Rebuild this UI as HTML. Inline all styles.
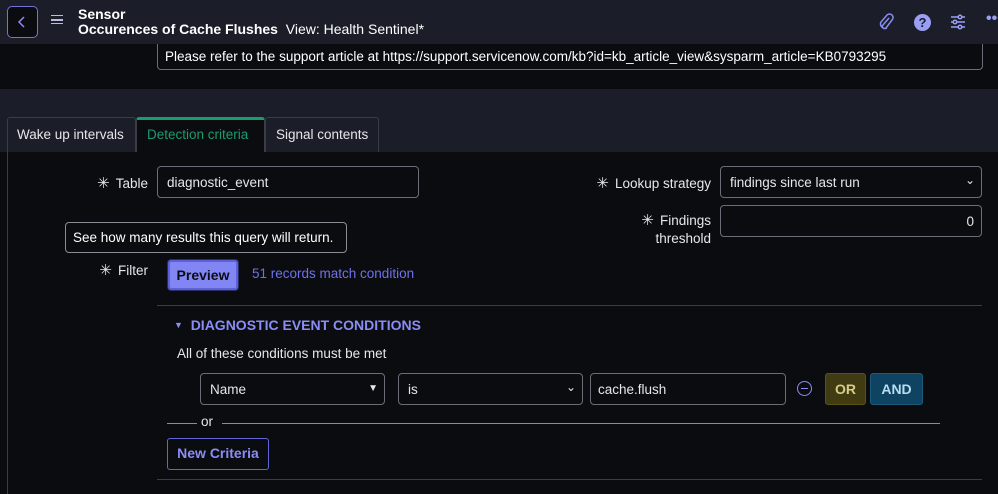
<!DOCTYPE html>
<html><head><style>
*{box-sizing:border-box;margin:0;padding:0}
body{width:998px;height:494px;overflow:hidden;background:#0b0c10;font-family:"Liberation Sans",sans-serif;font-size:13.5px;color:#e6e7ea;position:relative}
.a{position:absolute;white-space:nowrap}
.inp{position:absolute;border:1px solid #6b6e78;border-radius:4px;background:#0b0c10;padding-left:9px;display:flex;align-items:center}
.lbl{position:absolute;text-align:right;white-space:nowrap}
.ast{font-size:15px;margin-right:6px}
</style></head><body>
<div class="a" style="left:0;top:0;width:998px;height:44px;background:#1b1e28"></div>
<div class="a" style="left:7px;top:6px;width:31px;height:32px;border:1.5px solid #7275d6;border-radius:5px;background:#0b0c10"></div>
<svg class="a" style="left:16px;top:15px" width="12" height="14"><path d="M8 2 L3 7 L8 12" stroke="#8a8df2" stroke-width="1.5" fill="none"/></svg>
<div class="a" style="left:51px;top:15px;width:12px;height:9px;border-top:1.5px solid #b9bce8;border-bottom:1.5px solid #b9bce8"></div>
<div class="a" style="left:51px;top:19px;width:12px;height:1.5px;background:#b9bce8"></div>
<div class="a" style="left:78px;top:6px;font-weight:bold;font-size:14px;color:#fff">Sensor</div>
<div class="a" style="left:78px;top:21px;font-size:14px;color:#fff"><b>Occurences of Cache Flushes</b>&nbsp; View: Health Sentinel*</div>
<svg class="a" style="left:878px;top:13px" width="16" height="18"><path d="M11 5 L5 12 a2 2 0 0 0 3 3 L14 7 a3.5 3.5 0 0 0 -5 -5 L3 9 a4.5 4.5 0 0 0 6 6" stroke="#8a8df2" stroke-width="1.5" fill="none"/></svg>
<div class="a" style="left:914px;top:14px;width:17px;height:17px;border-radius:50%;background:#9b9ef5;color:#1b1e28;font-weight:bold;font-size:13px;text-align:center;line-height:17px">?</div>
<svg class="a" style="left:950px;top:14px" width="16" height="16"><g stroke="#9b9ef5" stroke-width="1.5" fill="#1b1e28"><line x1="1" y1="3" x2="15" y2="3"/><line x1="1" y1="8" x2="15" y2="8"/><line x1="1" y1="13" x2="15" y2="13"/><circle cx="10" cy="3" r="1.8"/><circle cx="5" cy="8" r="1.8"/><circle cx="10" cy="13" r="1.8"/></g></svg>
<div class="a" style="left:986px;top:10px;color:#9b9ef5;font-weight:bold;font-size:16px">•••</div>
<div class="inp" style="left:157px;top:44px;width:826px;height:26px;border-top:none;border-radius:0 0 4px 4px;color:#fff;padding-left:7px;font-size:13.5px">Please refer to the support article at https://support.servicenow.com/kb?id=kb_article_view&amp;sysparm_article=KB0793295</div>
<div class="a" style="left:0;top:89px;width:998px;height:63px;background:#1b1e28"></div>
<div class="a" style="left:7px;top:117px;width:129px;height:36px;background:#1b1e28;border:1px solid #3a3d47;border-bottom:none;border-radius:3px 3px 0 0;padding:9px 0 0 9px">Wake up intervals</div>
<div class="a" style="left:136px;top:117px;width:129px;height:36px;background:#0b0c10;border:1px solid #3a3d47;border-top:3px solid #1a9c6c;border-bottom:none;border-radius:3px 3px 0 0;padding:7px 0 0 10px;color:#1a9c6c">Detection criteria</div>
<div class="a" style="left:265px;top:117px;width:114px;height:36px;background:#1b1e28;border:1px solid #3a3d47;border-bottom:none;border-radius:3px 3px 0 0;padding:9px 0 0 10px">Signal contents</div>
<div class="a" style="left:7px;top:152px;width:991px;height:342px;background:#0b0c10;border-left:1px solid #3a3d47"></div>
<div class="lbl" style="left:90px;top:174px;width:58px"><span class="ast">✳</span>Table</div>
<div class="inp" style="left:157px;top:166px;width:262px;height:32px">diagnostic_event</div>
<div class="lbl" style="left:560px;top:174px;width:151px"><span class="ast">✳</span>Lookup strategy</div>
<div class="inp" style="left:720px;top:166px;width:262px;height:32px">findings since last run<span style="position:absolute;right:6px;top:6px;font-size:12px">⌄</span></div>
<div class="lbl" style="left:600px;top:212px;width:111px;line-height:18px"><span class="ast">✳</span>Findings<br>threshold</div>
<div class="inp" style="left:720px;top:205px;width:262px;height:32px;justify-content:flex-end;padding-right:7px">0</div>
<div class="inp" style="left:65px;top:222px;width:282px;height:31px;background:#0b0c10;border-color:#8a8d96;padding-left:7px;color:#fff">See how many results this query will return.</div>
<div class="lbl" style="left:90px;top:261px;width:58px"><span class="ast">✳</span>Filter</div>
<div class="a" style="left:168px;top:260px;width:70px;height:30px;background:#8286f5;border:2px solid #5d60d6;border-radius:3px;color:#0b0c10;text-align:center;line-height:26px;font-size:14px;font-weight:bold;box-shadow:0 0 0 1px #2a2d60">Preview</div>
<div class="a" style="left:252px;top:266px;color:#6e72ea">51 records match condition</div>
<div class="a" style="left:157px;top:305px;width:825px;height:1px;background:#3a3d47"></div>
<div class="a" style="left:174px;top:317px;color:#8a8df5;font-size:14px;font-weight:bold"><span style="font-size:9px;vertical-align:2px">▼</span>&nbsp; DIAGNOSTIC EVENT CONDITIONS</div>
<div class="a" style="left:177px;top:346px">All of these conditions must be met</div>
<div class="inp" style="left:200px;top:373px;width:185px;height:32px">Name<span style="position:absolute;right:6px;top:9px;font-size:10px">▼</span></div>
<div class="inp" style="left:398px;top:373px;width:185px;height:32px">is<span style="position:absolute;right:6px;top:6px;font-size:12px">⌄</span></div>
<div class="inp" style="left:590px;top:373px;width:196px;height:32px;padding-left:7px">cache.flush</div>
<div class="a" style="left:797px;top:381px;width:15px;height:15px;border:1.5px solid #8a8df5;border-radius:50%"></div>
<div class="a" style="left:801px;top:387.5px;width:7px;height:1.5px;background:#8a8df5"></div>
<div class="a" style="left:825px;top:373px;width:41px;height:32px;background:#403b10;border:1px solid #5a5318;border-radius:3px;color:#d8cc8a;text-align:center;line-height:30px;font-size:14px;font-weight:bold">OR</div>
<div class="a" style="left:870px;top:373px;width:53px;height:32px;background:#0e4462;border:1px solid #1c5a7a;border-radius:3px;color:#b9dcf2;text-align:center;line-height:30px;font-size:14px;font-weight:bold">AND</div>
<div class="a" style="left:167px;top:423px;width:30px;height:1px;background:#8a8d96"></div>
<div class="a" style="left:201px;top:414px">or</div>
<div class="a" style="left:222px;top:423px;width:718px;height:1px;background:#8a8d96"></div>
<div class="a" style="left:167px;top:438px;width:102px;height:32px;border:1.5px solid #6265d8;border-radius:3px;color:#8a8df5;text-align:center;line-height:29px;font-size:14px;font-weight:bold">New Criteria</div>
<div class="a" style="left:157px;top:479px;width:825px;height:1px;background:#3a3d47"></div>
</body></html>
